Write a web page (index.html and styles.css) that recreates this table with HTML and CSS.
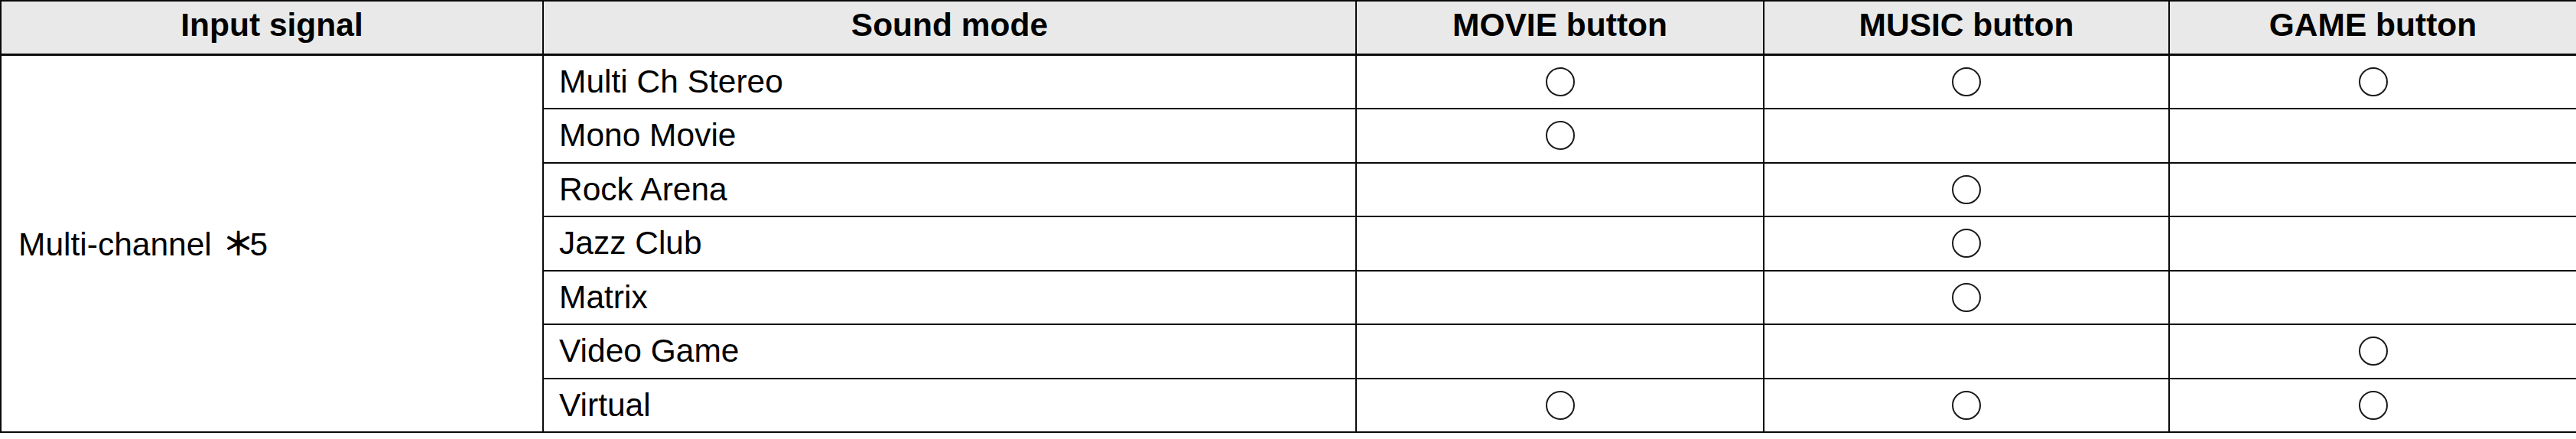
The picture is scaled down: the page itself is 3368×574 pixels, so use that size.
FILE: index.html
```html
<!DOCTYPE html>
<html lang="en">
<head>
<meta charset="utf-8">
<title>Sound modes</title>
<link rel="stylesheet" href="styles.css">
</head>
<body>
<table class="modes">
  <colgroup>
    <col class="c-input">
    <col class="c-mode">
    <col class="c-btn1">
    <col class="c-btn2">
    <col class="c-btn3">
  </colgroup>
  <thead>
    <tr class="head-row">
      <th>Input signal</th>
      <th>Sound mode</th>
      <th>MOVIE button</th>
      <th>MUSIC button</th>
      <th>GAME button</th>
    </tr>
  </thead>
  <tbody>
    <tr>
      <td class="signal" rowspan="7">Multi-channel <span class="ast">＊</span>5</td>
      <td class="mode">Multi Ch Stereo</td>
      <td class="mk"><span class="circle"></span></td>
      <td class="mk"><span class="circle"></span></td>
      <td class="mk"><span class="circle"></span></td>
    </tr>
    <tr>
      <td class="mode">Mono Movie</td>
      <td class="mk"><span class="circle"></span></td>
      <td class="mk"></td>
      <td class="mk"></td>
    </tr>
    <tr>
      <td class="mode">Rock Arena</td>
      <td class="mk"></td>
      <td class="mk"><span class="circle"></span></td>
      <td class="mk"></td>
    </tr>
    <tr>
      <td class="mode">Jazz Club</td>
      <td class="mk"></td>
      <td class="mk"><span class="circle"></span></td>
      <td class="mk"></td>
    </tr>
    <tr>
      <td class="mode">Matrix</td>
      <td class="mk"></td>
      <td class="mk"><span class="circle"></span></td>
      <td class="mk"></td>
    </tr>
    <tr>
      <td class="mode">Video Game</td>
      <td class="mk"></td>
      <td class="mk"></td>
      <td class="mk"><span class="circle"></span></td>
    </tr>
    <tr>
      <td class="mode">Virtual</td>
      <td class="mk"><span class="circle"></span></td>
      <td class="mk"><span class="circle"></span></td>
      <td class="mk"><span class="circle"></span></td>
    </tr>
  </tbody>
</table>
</body>
</html>
```

FILE: styles.css
```css
html, body {
  margin: 0;
  padding: 0;
  background: #ffffff;
}

body {
  font-family: "Liberation Sans", Arial, "Noto Sans CJK JP", sans-serif;
  color: #000000;
}

.modes {
  border-collapse: collapse;
  table-layout: fixed;
  width: 3368px;
  font-size: 42.5px;
}

.c-input { width: 709px; }
.c-mode  { width: 1063px; }
.c-btn1  { width: 533px; }
.c-btn2  { width: 530px; }
.c-btn3  { width: 533px; }

.modes th,
.modes td {
  border: 2px solid #0a0a0a;
  padding: 0;
  line-height: 1;
}

.head-row th {
  height: 62px;
  background: #e9e9e9;
  font-weight: bold;
  text-align: center;
  vertical-align: middle;
  padding-bottom: 6px;
  border-bottom: 3px solid #0a0a0a;
}

.modes tbody tr {
  height: 70.5px;
}

.signal {
  text-align: left;
  vertical-align: middle;
  padding-left: 22px !important;
}

.ast {
  font-family: "Noto Sans CJK JP", sans-serif;
  font-weight: bold;
  font-size: 42px;
  margin-left: 2px;
  margin-right: -6px;
}

.mode {
  padding-left: 20px !important;
  text-align: left;
  vertical-align: middle;
}

.mk {
  text-align: center;
  vertical-align: middle;
}

.circle {
  display: block;
  width: 38px;
  height: 38px;
  margin: 0 auto;
  box-sizing: border-box;
  border: 2px solid #1a1a1a;
  border-radius: 50%;
}
```
